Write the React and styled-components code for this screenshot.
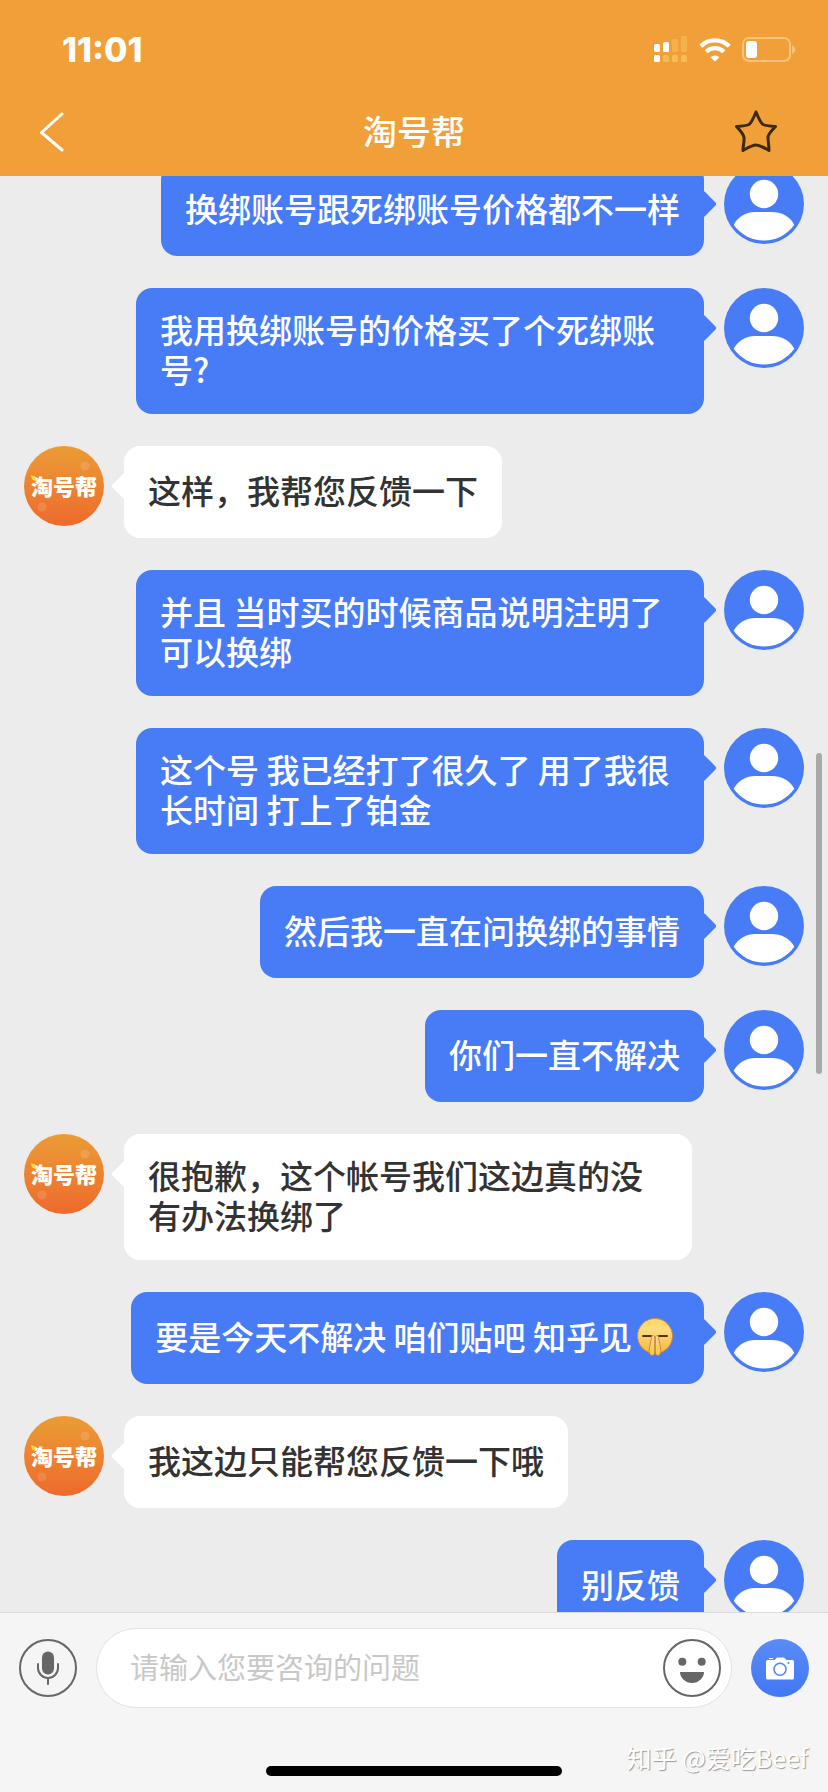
import React from 'react'
import styled, { createGlobalStyle } from 'styled-components'

const messages = [
  { id: 1, mine: true, text: '换绑账号跟死绑账号价格都不一样' },
  { id: 2, mine: true, text: '我用换绑账号的价格买了个死绑账号?' },
  { id: 3, mine: false, text: '这样，我帮您反馈一下' },
  { id: 4, mine: true, text: '并且 当时买的时候商品说明注明了可以换绑' },
  { id: 5, mine: true, text: '这个号 我已经打了很久了 用了我很长时间 打上了铂金' },
  { id: 6, mine: true, text: '然后我一直在问换绑的事情' },
  { id: 7, mine: true, text: '你们一直不解决' },
  { id: 8, mine: false, text: '很抱歉，这个帐号我们这边真的没有办法换绑了' },
  { id: 9, mine: true, text: '要是今天不解决 咱们贴吧 知乎见', emoji: true },
  { id: 10, mine: false, text: '我这边只能帮您反馈一下哦' },
  { id: 11, mine: true, text: '别反馈' },
]

const SignalIcon = () => (
  <svg width='34' height='28' viewBox='0 0 34 28' fill='#fff' aria-hidden='true'>
    <rect x='0' y='8' width='6' height='8' rx='1.5' />
    <rect x='9' y='6' width='6' height='10' rx='1.5' />
    <rect x='18' y='3' width='6' height='13' rx='1.5' fill='#f4b24e' />
    <rect x='27' y='0' width='6' height='16' rx='1.5' fill='#f4b24e' />
    <rect x='0' y='19' width='6' height='7' rx='1.5' />
    <rect x='9' y='19' width='6' height='7' rx='1.5' fill='#f6bd55' />
    <rect x='18' y='19' width='6' height='7' rx='1.5' fill='#f6bd55' />
    <rect x='27' y='19' width='6' height='7' rx='1.5' fill='#f6bd55' />
  </svg>
)

const WifiIcon = () => (
  <svg width='32' height='24' viewBox='0 0 32 24' fill='none' stroke='#fff' aria-hidden='true'>
    <path d='M1.8 8.2a20.2 20.2 0 0 1 28.4 0' strokeWidth='4.4' />
    <path d='M7.2 13.8a12.6 12.6 0 0 1 17.6 0' strokeWidth='4.2' />
    <path d='M16 23.6l-4.4-4.4a6.4 6.4 0 0 1 8.8 0z' fill='#fff' stroke='none' />
  </svg>
)

const BatteryIcon = () => (
  <svg width='54' height='26' viewBox='0 0 54 26' aria-hidden='true'>
    <rect x='1' y='1' width='47' height='23' rx='6' fill='none' stroke='#f7c27c' strokeWidth='2' />
    <rect x='4' y='4' width='11' height='17' rx='3' fill='#fff' />
    <path d='M50 8.5c4.5 1.5 4.5 7 0 8.5z' fill='#f7c27c' />
  </svg>
)

const BackIcon = () => (
  <svg width='26' height='40' viewBox='0 0 26 40' fill='none' stroke='#fff' strokeWidth='3' strokeLinecap='round' strokeLinejoin='round'>
    <path d='M23 2L2.5 20.5L23 38' />
  </svg>
)

const StarIcon = () => (
  <svg width='44' height='44' viewBox='0 0 44 44' fill='none' stroke='#3b2a12' strokeWidth='3' strokeLinejoin='round'>
    <path d='M22 2C24.5 8 26.5 13 29 14.5C32 16 37 16 41.5 16.5C37.5 21 34 24 34 27.5C34 31 35 35.5 35 40.5C30.5 38 26 35 22 35C18 35 13.5 38 9 40.5C9 35.5 10.5 31 10 27.5C9.5 24 6.5 21 2.5 16.5C7 16 12 16 15 14.5C17.5 13 19.5 8 22 2Z' />
  </svg>
)

const UserIcon = () => (
  <svg width='80' height='80' viewBox='0 0 80 80' aria-hidden='true'>
    <circle cx='40' cy='40' r='40' fill='#477cf6' />
    <circle cx='40' cy='30' r='14.2' fill='#fff' />
    <path d='M9.7 60.7C14 52.5 23 48 31 48H48C57 48 66 52.5 70.3 60.7A36.8 36.8 0 0 1 9.7 60.7Z' fill='#fff' />
  </svg>
)

const LogoDecor = () => (
  <svg width='80' height='80' viewBox='0 0 80 80' aria-hidden='true'>
    <circle cx='61' cy='20' r='4.5' fill='#fff' opacity='0.14' />
    <circle cx='18' cy='61' r='4.5' fill='#fff' opacity='0.12' />
    <path d='M7 29l4 1.5 1 4.5-4-1.5z' fill='#ffd93b' />
  </svg>
)

const EmojiIcon = () => (
  <svg width='38' height='40' viewBox='0 0 38 40' aria-hidden='true'>
    <defs>
      <linearGradient id='face' x1='0' y1='0' x2='0' y2='1'>
        <stop offset='0' stopColor='#fbd75e' />
        <stop offset='0.3' stopColor='#fddc80' />
        <stop offset='1' stopColor='#f6b73c' />
      </linearGradient>
      <linearGradient id='hand' x1='0' y1='0' x2='0' y2='1'>
        <stop offset='0' stopColor='#fbd9a0' />
        <stop offset='1' stopColor='#fcc63d' />
      </linearGradient>
    </defs>
    <circle cx='19' cy='19' r='17.5' fill='url(#face)' stroke='#c98a45' strokeWidth='1' />
    <path d='M7 19h8M23 19h8' stroke='#4f3413' strokeWidth='2' strokeLinecap='round' />
    <path d='M18.7 19.5c-1.2-1.6-3-1-3.2 1L13.5 31c-.8 3-.2 7.5 2.5 7.5 2 0 2.7-1.5 2.7-3.5zM19.3 19.5c1.2-1.6 3-1 3.2 1l2 10.5c.8 3 .2 7.5-2.5 7.5-2 0-2.7-1.5-2.7-3.5z' fill='url(#hand)' stroke='#c07c2c' strokeWidth='0.8' />
  </svg>
)

const MicIcon = () => (
  <svg width='58' height='58' viewBox='0 0 58 58' fill='none' stroke='#666' strokeWidth='2' strokeLinecap='round'>
    <circle cx='29' cy='29' r='28' />
    <rect x='23' y='12.5' width='12' height='23' rx='6' fill='#666' stroke='none' />
    <path d='M19 25v4a10 10 0 0 0 20 0v-4M29 39v6' />
  </svg>
)

const SmileIcon = () => (
  <svg width='58' height='58' viewBox='0 0 58 58' aria-hidden='true'>
    <circle cx='29' cy='29' r='28' fill='none' stroke='#666' strokeWidth='2' />
    <circle cx='19.3' cy='22.7' r='4' fill='#666' />
    <circle cx='38.7' cy='22.7' r='4' fill='#666' />
    <path d='M17 33h24c0 6-5.5 11-12 11s-12-5-12-11z' fill='#666' />
  </svg>
)

const CameraIcon = () => (
  <svg width='28' height='23' viewBox='0 0 28 23' aria-hidden='true'>
    <path d='M1.5 3H8.5L11 0.5H18L20.5 3H26.5Q28 3 28 4.5V21Q28 22.5 26.5 22.5H1.5Q0 22.5 0 21V4.5Q0 3 1.5 3ZM3 1h4v1H3z' fill='#fff' />
    <circle cx='14' cy='12.2' r='6' fill='none' stroke='#4f82f6' strokeWidth='1.5' />
    <circle cx='22.5' cy='6' r='1' fill='#4f82f6' />
  </svg>
)

const Message = ({ mine, text, emoji }) => (
  <MessageRow $mine={mine}>
    {mine ? (
      <UserAvatar>
        <UserIcon />
      </UserAvatar>
    ) : (
      <ShopAvatar>
        <span>淘号帮</span>
        <LogoDecor />
      </ShopAvatar>
    )}
    <Bubble $mine={mine} $oneLine={emoji}>
      <p>{text}</p>
      {emoji && <EmojiIcon />}
    </Bubble>
  </MessageRow>
)

const App = () => {
  return (
    <Screen>
      <GlobalStyle />
      <Header>
        <StatusBar>
          <time>11:01</time>
          <StatusIcons>
            <SignalIcon />
            <WifiIcon />
            <BatteryIcon />
          </StatusIcons>
        </StatusBar>
        <NavBar>
          <IconButton aria-label='返回'>
            <BackIcon />
          </IconButton>
          <h1>淘号帮</h1>
          <IconButton aria-label='收藏'>
            <StarIcon />
          </IconButton>
        </NavBar>
      </Header>
      <Chat>
        <MessageList>
          {messages.map(message => (
            <Message key={message.id} {...message} />
          ))}
        </MessageList>
        <ScrollThumb />
      </Chat>
      <Footer>
        <Composer>
          <IconButton aria-label='语音'>
            <MicIcon />
          </IconButton>
          <InputBox>
            <input type='text' aria-label='请输入您要咨询的问题' placeholder='请输入您要咨询的问题' />
            <IconButton aria-label='表情'>
              <SmileIcon />
            </IconButton>
          </InputBox>
          <CameraButton aria-label='拍照'>
            <CameraIcon />
          </CameraButton>
        </Composer>
        <HomeIndicator />
        <Watermark>知乎 @爱吃Beef</Watermark>
      </Footer>
    </Screen>
  )
}

const GlobalStyle = createGlobalStyle`
  * {
    box-sizing: border-box;
  }
  body {
    margin: 0;
    font-family: 'Noto Sans CJK SC', sans-serif;
  }
  h1, p {
    margin: 0;
  }
`

const Screen = styled.div`
  display: flex;
  flex-direction: column;
  height: 100vh;
  background: #ececec;
`

const Header = styled.header`
  flex: none;
  background: #f19f38;
  color: #fff;
`

const StatusBar = styled.div`
  display: flex;
  align-items: center;
  justify-content: space-between;
  height: 88px;
  padding: 11px 32px 0 62px;
  time {
    font: 800 34px Inter, sans-serif;
  }
`

const StatusIcons = styled.div`
  display: flex;
  align-items: center;
  gap: 11px;
`

const NavBar = styled.div`
  display: grid;
  grid-template-columns: 1fr auto 1fr;
  align-items: center;
  height: 88px;
  h1 {
    padding-bottom: 2px;
    font-size: 34px;
    font-weight: 500;
    line-height: 48px;
  }
  button:first-child {
    margin-left: 39px;
  }
  button:last-child {
    justify-self: end;
    margin-right: 50px;
  }
`

const IconButton = styled.button`
  display: flex;
  flex: none;
  padding: 0;
  border: 0;
  background: none;
`

const Chat = styled.main`
  position: relative;
  flex: 1;
  min-height: 0;
  overflow: hidden;
`

const MessageList = styled.div`
  display: flex;
  flex-direction: column;
  gap: 32px;
  margin-top: -12px;
  padding: 0 24px;
`

const MessageRow = styled.div`
  display: flex;
  flex-direction: ${({ $mine }) => ($mine ? 'row-reverse' : 'row')};
  align-items: flex-start;
  gap: 20px;
`

const UserAvatar = styled.div`
  flex: none;
  width: 80px;
  height: 80px;
`

const ShopAvatar = styled.div`
  position: relative;
  display: flex;
  flex: none;
  align-items: center;
  justify-content: center;
  width: 80px;
  height: 80px;
  padding-bottom: 2px;
  border-radius: 50%;
  background: linear-gradient(#eb9c35, #ee6a2d);
  color: #fff;
  font-size: 22px;
  font-weight: 900;
  line-height: 28px;
  svg {
    position: absolute;
    inset: 0;
  }
`

const Bubble = styled.div`
  position: relative;
  display: flex;
  align-items: center;
  min-height: 92px;
  max-width: ${({ $oneLine }) => ($oneLine ? 'none' : '568px')};
  padding: 21px 24px 25px;
  border-radius: 16px;
  background: ${({ $mine }) => ($mine ? '#477cf6' : '#fff')};
  color: ${({ $mine }) => ($mine ? '#fff' : '#333')};
  font-size: 33px;
  font-weight: 500;
  line-height: 40px;
  svg {
    margin: 2px 6px 0 4px;
  }
  &::before {
    content: '';
    position: absolute;
    top: 30px;
    ${({ $mine }) => ($mine ? 'right' : 'left')}: -9px;
    width: 20px;
    height: 20px;
    border-radius: 3px;
    background: inherit;
    transform: rotate(45deg);
  }
`

const ScrollThumb = styled.div`
  position: absolute;
  top: 577px;
  right: 6px;
  width: 6px;
  height: 321px;
  border-radius: 3px;
  background: #a9a9a9;
`

const Footer = styled.footer`
  position: relative;
  flex: none;
  height: 180px;
  border-top: 1px solid #dcdcdc;
  background: #f5f5f5;
`

const Composer = styled.div`
  display: flex;
  align-items: center;
  gap: 19px;
  padding: 15px 19px 0;
`

const InputBox = styled.div`
  display: flex;
  flex: 1;
  align-items: center;
  height: 80px;
  padding: 0 10px 0 33px;
  border: 1px solid #e2e2e2;
  border-radius: 40px;
  background: #fff;
  input {
    flex: 1;
    min-width: 0;
    padding: 0 0 4px;
    border: 0;
    outline: 0;
    background: none;
    font: 29px 'Noto Sans CJK SC', sans-serif;
  }
  input::placeholder {
    color: #c8c8c8;
  }
`

const CameraButton = styled(IconButton)`
  align-items: center;
  justify-content: center;
  width: 58px;
  height: 58px;
  border-radius: 50%;
  background: linear-gradient(#5b8bf7, #4277f5);
`

const HomeIndicator = styled.div`
  width: 296px;
  height: 10px;
  margin: 58px auto 0;
  border-radius: 5px;
  background: #000;
`

const Watermark = styled.span`
  position: absolute;
  right: 20px;
  bottom: 17px;
  color: #fff;
  font: 25px 'Noto Sans CJK SC', sans-serif;
  text-shadow: 1px 1px 1px #999;
`

export default App
